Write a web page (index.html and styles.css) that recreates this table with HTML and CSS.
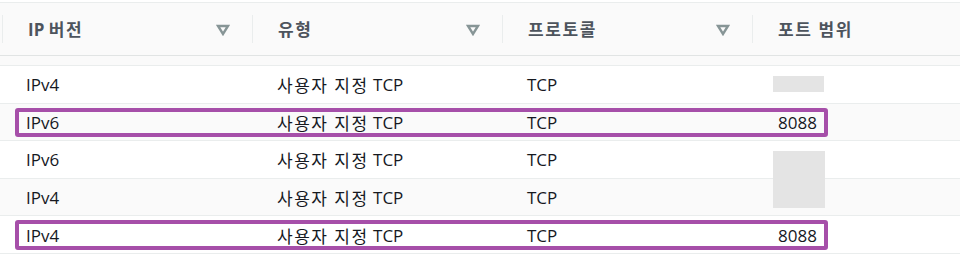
FILE: index.html
```html
<!DOCTYPE html>
<html lang="ko">
<head>
<meta charset="utf-8">
<link rel="stylesheet" href="styles.css">
</head>
<body>
<div class="table">
  <div class="head">
    <div class="th"><span class="sep"></span><span class="label">IP <span class="ko">버전</span></span><svg class="sort" width="14" height="12" viewBox="0 0 14 12"><polygon points="2,2 12,2 7,10" fill="none" stroke="#879596" stroke-width="2.4"/></svg></div>
    <div class="th"><span class="sep"></span><span class="label ko">유형</span><svg class="sort" width="14" height="12" viewBox="0 0 14 12"><polygon points="2,2 12,2 7,10" fill="none" stroke="#879596" stroke-width="2.4"/></svg></div>
    <div class="th"><span class="sep"></span><span class="label ko">프로토콜</span><svg class="sort" width="14" height="12" viewBox="0 0 14 12"><polygon points="2,2 12,2 7,10" fill="none" stroke="#879596" stroke-width="2.4"/></svg></div>
    <div class="th"><span class="sep"></span><span class="label ko">포트 범위</span></div>
  </div>
  <div class="gap"></div>
  <div class="body">
    <div class="row">
      <div class="td">IPv4</div><div class="td"><span class="ko">사용자 지정</span> TCP</div><div class="td">TCP</div><div class="td port"><span class="val blur small"></span></div>
    </div>
    <div class="row alt">
      <div class="td">IPv6</div><div class="td"><span class="ko">사용자 지정</span> TCP</div><div class="td">TCP</div><div class="td port"><span class="val">8088</span></div>
      <span class="mark"></span>
    </div>
    <div class="row">
      <div class="td">IPv6</div><div class="td"><span class="ko">사용자 지정</span> TCP</div><div class="td">TCP</div><div class="td port"></div>
    </div>
    <div class="row alt">
      <div class="td">IPv4</div><div class="td"><span class="ko">사용자 지정</span> TCP</div><div class="td">TCP</div><div class="td port"></div>
    </div>
    <div class="row">
      <div class="td">IPv4</div><div class="td"><span class="ko">사용자 지정</span> TCP</div><div class="td">TCP</div><div class="td port"><span class="val">8088</span></div>
      <span class="mark"></span>
    </div>
    <span class="blur tall"></span>
  </div>
</div>
</body>
</html>
```
FILE: styles.css
```css
* { box-sizing: border-box; }
html, body { margin: 0; padding: 0; background: #fff; }
body {
  font-family: "Open Sans", "Noto Sans CJK KR", sans-serif;
  color: #16191f;
  width: 960px;
  height: 255px;
  overflow: hidden;
}
.ko { letter-spacing: 1.6px; }
.table { padding-top: 2px; }
.head {
  display: grid;
  grid-template-columns: 250px 250px 250px 1fr;
  padding-left: 2px;
  height: 54px;
  background: #fafafa;
  border-top: 1px solid #eaeded;
  border-bottom: 1px solid #e1e4e4;
  box-shadow: 0 1px 1px #e8ebeb;
}
.th {
  position: relative;
  display: flex;
  align-items: center;
  padding: 0 22px 0 26px;
  font-weight: 700;
  font-size: 17px;
  color: #4d545d;
}
.sep {
  position: absolute;
  left: 0;
  top: 12px;
  bottom: 12px;
  width: 1px;
  background: #eaeded;
}
.label { flex: 1; padding-bottom: 1px; }
.sort { display: block; margin-top: 1px; }
.gap {
  height: 10px;
  background: #fafafa;
  border-bottom: 1px solid #eaeded;
}
.body { position: relative; }
.row {
  position: relative;
  display: grid;
  grid-template-columns: 251px 250px 250px 1fr;
  height: 37.6px;
  border-bottom: 1px solid #eaeded;
  font-size: 17px;
}
.row.alt { background: #fafafa; }
.row .ko { letter-spacing: 1.5px; }
.td {
  display: flex;
  align-items: center;
  padding-left: 26px;
  padding-top: 1px;
  white-space: pre;
}
.td.port { padding-left: 22px; }
.val {
  display: block;
  width: 51px;
  text-align: right;
  padding-right: 7px;
}
.mark {
  position: absolute;
  left: 15px;
  width: 813px;
  top: 4px;
  bottom: 3px;
  border: 4px solid #a64fa9;
  border-radius: 3px;
}
.blur { background: #e4e4e4; display: block; }
.blur.small { height: 16px; margin-top: -1px; }
.blur.tall {
  position: absolute;
  left: 773px;
  top: 85px;
  width: 52px;
  height: 57px;
}
```
